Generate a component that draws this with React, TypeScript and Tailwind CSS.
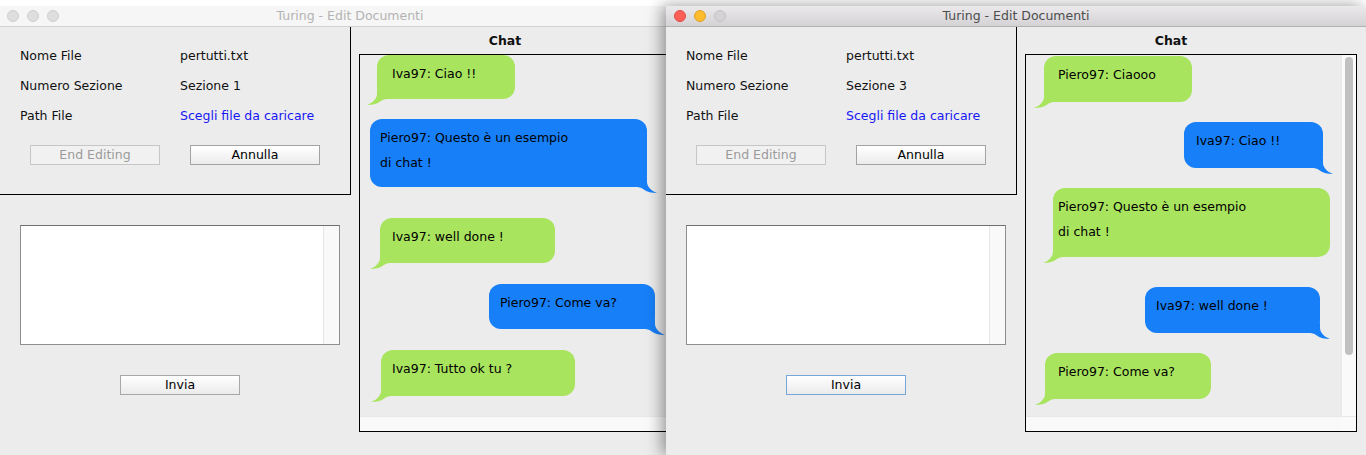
import React from "react";

type Bubble = { text: string[]; side: "l" | "r"; box: string; pad: string };

const leftChat: Bubble[] = [
  { text: ["Iva97: Ciao !!"], side: "l", box: "mt-0 ml-[17px] w-[138px] h-[44px]", pad: "pl-[15px]" },
  { text: ["Piero97: Questo è un esempio", "di chat !"], side: "r", box: "mt-[20px] ml-[10px] w-[277px] h-[68px]", pad: "pl-[10px]" },
  { text: ["Iva97: well done !"], side: "l", box: "mt-[31px] ml-[20px] w-[175px] h-[45px]", pad: "pl-[12px]" },
  { text: ["Piero97: Come va?"], side: "r", box: "mt-[21px] ml-[129px] w-[166px] h-[45px]", pad: "pl-[11px]" },
  { text: ["Iva97: Tutto ok tu ?"], side: "l", box: "mt-[21px] ml-[21px] w-[194px] h-[46px]", pad: "pl-[11px]" },
];

const rightChat: Bubble[] = [
  { text: ["Piero97: Ciaooo"], side: "l", box: "mt-[1px] ml-[18px] w-[148px] h-[46px]", pad: "pl-[14px]" },
  { text: ["Iva97: Ciao !!"], side: "r", box: "mt-[20px] ml-[158px] w-[139px] h-[46px]", pad: "pl-[12px]" },
  { text: ["Piero97: Questo è un esempio", "di chat !"], side: "l", box: "mt-[20px] ml-[27px] w-[277px] h-[69px]", pad: "pl-[5px]" },
  { text: ["Iva97: well done !"], side: "r", box: "mt-[30px] ml-[119px] w-[175px] h-[46px]", pad: "pl-[11px]" },
  { text: ["Piero97: Come va?"], side: "l", box: "mt-[20px] ml-[19px] w-[166px] h-[46px]", pad: "pl-[13px]" },
];

const GREEN = "#a9e45f";
const BLUE = "#177ff8";

function Tail({ side }: { side: "l" | "r" }) {
  return (
    <svg
      width="26"
      height="16"
      viewBox="0 0 26 16"
      className={side === "l" ? "absolute left-[-10px] bottom-[-6px]" : "absolute right-[-10px] bottom-[-6px] -scale-x-100"}
    >
      <path
        d="M10 0 L10 5 C10 9 6 14 0 16 C5 16 10 15 14 12 C16 10.5 18 10 22 10 L26 10 L26 0 Z"
        fill={side === "l" ? GREEN : BLUE}
      />
    </svg>
  );
}

function ChatBubble({ b }: { b: Bubble }) {
  return (
    <div
      className={`relative shrink-0 rounded-[12px] pt-[6px] leading-[25px] text-[12.5px] text-black ${b.box} ${b.pad}`}
      style={{ backgroundColor: b.side === "l" ? GREEN : BLUE }}
    >
      {b.text.map((t, i) => (
        <div key={i} className="whitespace-nowrap">{t}</div>
      ))}
      <Tail side={b.side} />
    </div>
  );
}

function Window({ active, section, chat }: { active: boolean; section: string; chat: Bubble[] }) {
  return (
    <div className="w-[700px] h-[449px] bg-[#ececec] flex flex-col font-['DejaVu_Sans',sans-serif]">
      {/* title bar */}
      {active ? (
        <div className="h-[21px] shrink-0 relative flex items-center justify-center pt-[1px] border-b border-[#b3b1b3] bg-linear-to-b from-[#ebe9eb] to-[#d4d2d4] rounded-tr-[5px]">
          <div className="absolute left-[8px] top-[4px] flex gap-[8px]">
            <div className="w-[12px] h-[12px] rounded-full bg-[#fc5f57] border border-[#df4b44]" />
            <div className="w-[12px] h-[12px] rounded-full bg-[#fdbc2e] border border-[#dea124]" />
            <div className="w-[12px] h-[12px] rounded-full bg-[#d3d3d3] border border-[#c2c2c2]" />
          </div>
          <span className="text-[12.5px] text-[#4d4d4d]">Turing - Edit Documenti</span>
        </div>
      ) : (
        <div className="h-[21px] shrink-0 relative flex items-center justify-center pt-[1px] border-b border-[#d2d2d2] bg-[#f6f6f6]">
          <div className="absolute left-[7px] top-[4px] flex gap-[8px]">
            <div className="w-[12px] h-[12px] rounded-full bg-[#dedede] border border-[#cfcfcf]" />
            <div className="w-[12px] h-[12px] rounded-full bg-[#dedede] border border-[#cfcfcf]" />
            <div className="w-[12px] h-[12px] rounded-full bg-[#dedede] border border-[#cfcfcf]" />
          </div>
          <span className="text-[12.5px] text-[#b3b3b3]">Turing - Edit Documenti</span>
        </div>
      )}

      <div className="flex flex-1">
        {/* left column */}
        <div className="w-[351px] shrink-0 flex flex-col">
          <div className="h-[168px] border-r border-b border-black pt-[14px] text-[12.5px] text-[#111]">
            <div className="h-[30px] flex items-center pl-[20px]">
              <span className="w-[160px]">Nome File</span>
              <span>pertutti.txt</span>
            </div>
            <div className="h-[30px] flex items-center pl-[20px]">
              <span className="w-[160px]">Numero Sezione</span>
              <span>{section}</span>
            </div>
            <div className="h-[30px] flex items-center pl-[20px]">
              <span className="w-[160px]">Path File</span>
              <span className="text-[#1717f4]">Scegli file da caricare</span>
            </div>
            <div className="mt-[14px] flex gap-[30px] pl-[30px]">
              <div className="w-[130px] h-[20px] border border-[#c6c6c6] bg-[#f1f1f1] flex items-center justify-center text-[#9b9b9b]">
                End Editing
              </div>
              <div className="w-[130px] h-[20px] border border-[#a3a3a3] bg-linear-to-b from-white to-[#ececec] flex items-center justify-center text-black">
                Annulla
              </div>
            </div>
          </div>

          <div className="mt-[30px] ml-[20px] w-[320px] h-[120px] border border-[#8e8e8e] border-t-[#6f6f6f] bg-white flex justify-end">
            <div className="w-[16px] h-full border-l border-[#e6e6e6] bg-[#f9f9f9]" />
          </div>

          <div
            className={`mt-[30px] ml-[120px] w-[120px] h-[20px] border bg-linear-to-b from-white to-[#ebebeb] flex items-center justify-center text-[12.5px] text-black ${
              active ? "border-[#79a6da]" : "border-[#a8a8a8]"
            }`}
          >
            Invia
          </div>
        </div>

        {/* chat column */}
        <div className="flex flex-col">
          <div className="h-[27px] w-[308px] flex items-center justify-center pt-[1px] text-[12.5px] font-bold text-[#111]">Chat</div>
          <div className="ml-[8px] w-[332px] h-[378px] border border-black flex flex-col">
            <div className="flex h-[361px]">
              <div className="w-[315px] h-full overflow-hidden flex flex-col items-start">
                {chat.map((b, i) => (
                  <ChatBubble key={i} b={b} />
                ))}
              </div>
              <div className="w-[15px] h-full border-l border-[#e8e8e8] bg-[#fafafa] pt-[2px] pl-[3px]">
                <div className="w-[8px] h-[298px] rounded-full bg-[#c1c1c1]" />
              </div>
            </div>
            <div className="flex h-[15px] border-t border-[#e8e8e8]">
              <div className="w-[315px] bg-[#f9f9f9]" />
              <div className="w-[15px] bg-[#fafafa]" />
            </div>
          </div>
        </div>
      </div>
    </div>
  );
}

export default function App() {
  return (
    <div className="w-[1366px] h-[455px] overflow-hidden bg-white pt-[6px] flex">
      <div className="w-[666px] shrink-0 overflow-hidden">
        <Window active={false} section="Sezione 1" chat={leftChat} />
      </div>
      <div className="relative z-10 shrink-0 shadow-[-4px_0_16px_rgba(0,0,0,0.4)] rounded-tr-[5px]">
        <Window active={true} section="Sezione 3" chat={rightChat} />
      </div>
    </div>
  );
}
